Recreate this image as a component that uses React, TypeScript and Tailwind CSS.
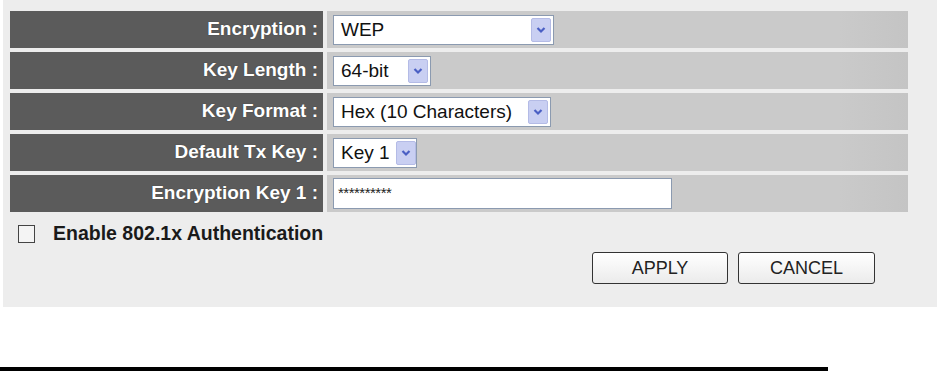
import React from 'react';

const font = { fontFamily: '"Liberation Sans", Arial, sans-serif' };

const Arrow: React.FC = () => (
  <div className="h-full w-[20px] shrink-0 bg-[#c9cff2] border border-[#b4bbe6] rounded-[2px] flex items-center justify-center">
    <svg width="10" height="8" viewBox="0 0 10 8">
      <path d="M1.5 2 L5 5.5 L8.5 2" fill="none" stroke="#4a5fc4" strokeWidth="2.2" />
    </svg>
  </div>
);

const FakeSelect: React.FC<{ value: string; width: string }> = ({ value, width }) => (
  <div className={`${width} h-[30px] bg-white border border-[#8b9ab0] flex items-center gap-[6px] pl-[7px] pr-[2px] py-[2px] text-[19px] text-[#111]`}>
    <span className="flex-1 leading-none whitespace-nowrap">{value}</span>
    <Arrow />
  </div>
);

interface RowProps {
  label: string;
  children: React.ReactNode;
}

const Row: React.FC<RowProps> = ({ label, children }) => (
  <div className="flex h-[37px] gap-[4px]">
    <div className="w-[313px] bg-[#5b5b5b] flex items-center justify-end pr-[5px] text-white font-bold text-[19px] [text-shadow:0_0_1px_#333]">
      {label}
    </div>
    <div className="flex-1 bg-gradient-to-r from-[#cacaca] via-[#cacaca] via-[88%] to-[#c4c4c4] flex items-center pl-[6px]">
      {children}
    </div>
  </div>
);

export default function App() {
  return (
    <div className="w-[937px] h-[371px] bg-white flex flex-col" style={font}>
      <div className="h-[307px] bg-[#ededed] border-l-[3px] border-l-white pt-[11px] pl-[7px]">
        <div className="w-[898px] flex flex-col gap-[4px]">
          <Row label="Encryption :">
            <FakeSelect value="WEP" width="w-[221px]" />
          </Row>
          <Row label="Key Length :">
            <FakeSelect value="64-bit" width="w-[98px]" />
          </Row>
          <Row label="Key Format :">
            <FakeSelect value="Hex (10 Characters)" width="w-[218px]" />
          </Row>
          <Row label="Default Tx Key :">
            <FakeSelect value="Key 1" width="w-[84px]" />
          </Row>
          <Row label="Encryption Key 1 :">
            <div className="w-[339px] h-[31px] bg-white border border-[#8b9ab0] flex items-center pl-[4px] text-[15px] text-[#222] tracking-[-0.5px]">
              **********
            </div>
          </Row>
        </div>

        <div className="mt-[11px] h-[22px] flex items-center pl-[8px] gap-[18px]">
          <div className="w-[17px] h-[18px] border border-[#444] bg-[#f4f4f4]" />
          <span className="text-[19.5px] font-bold text-[#1a1a1a]">Enable 802.1x Authentication</span>
        </div>

        <div className="w-[898px] flex justify-end gap-[10px] pr-[33px] mt-[7px]">
          <button className="w-[136px] h-[32px] border border-[#333] rounded-[3px] bg-gradient-to-b from-white to-[#ebebeb] text-[18px] text-[#222]">
            APPLY
          </button>
          <button className="w-[137px] h-[32px] border border-[#333] rounded-[3px] bg-gradient-to-b from-white to-[#ebebeb] text-[18px] text-[#222]">
            CANCEL
          </button>
        </div>
      </div>
      <div className="flex-1 flex flex-col justify-end">
        <div className="w-[828px] h-[4px] bg-black" />
      </div>
    </div>
  );
}
